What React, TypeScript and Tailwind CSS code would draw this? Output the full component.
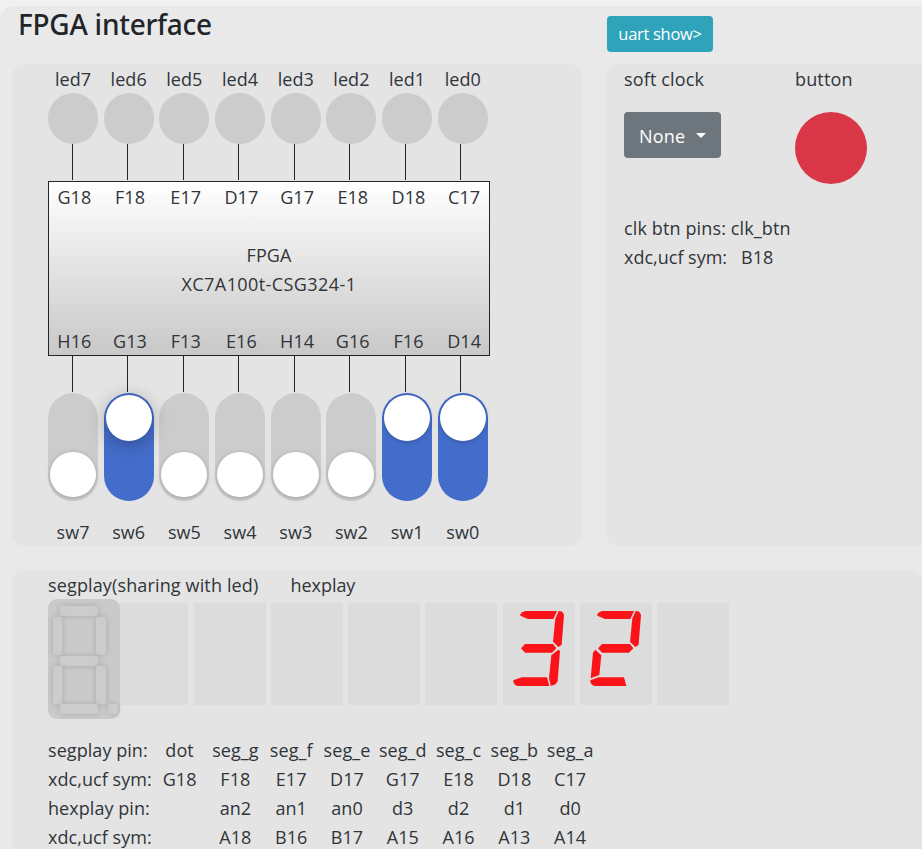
import React from "react";

const ledPins = ["G18", "F18", "E17", "D17", "G17", "E18", "D18", "C17"];
const switchPins = ["H16", "G13", "F13", "E16", "H14", "G16", "F16", "D14"];
const switches = [
  { name: "sw7", on: false, focused: false },
  { name: "sw6", on: true, focused: true },
  { name: "sw5", on: false, focused: false },
  { name: "sw4", on: false, focused: false },
  { name: "sw3", on: false, focused: false },
  { name: "sw2", on: false, focused: false },
  { name: "sw1", on: true, focused: false },
  { name: "sw0", on: true, focused: false },
];

const pinRows = [
  ["segplay pin:", "dot", "seg_g", "seg_f", "seg_e", "seg_d", "seg_c", "seg_b", "seg_a"],
  ["xdc,ucf sym:", "G18", "F18", "E17", "D17", "G17", "E18", "D18", "C17"],
  ["hexplay pin:", "", "an2", "an1", "an0", "d3", "d2", "d1", "d0"],
  ["xdc,ucf sym:", "", "A18", "B16", "B17", "A15", "A16", "A13", "A14"],
];

const segmentPaths: Record<string, string> = {
  a: "M52 34Q57 26 66 24H162L151 48H75L52 38Z",
  b: "M167 24Q181 24 183 37L176 124Q172 131 166 132L150 116L157 47Z",
  c: "M166 140L171 144L164 234Q159 248 143 248L138 226L145 157Z",
  d: "M31 232L56 223H132L139 249H45Q33 246 31 236Z",
  e: "M46 140L64 157L58 216L32 226L39 149Z",
  g: "M54 136L66 123H150L160 136L147 149H66Z",
};

const hexCells = ["", "", "", "", "", "abgcd", "abged", ""];

function Wires() {
  return (
    <div className="ml-6 flex h-9 w-[389px] justify-between">
      {ledPins.map((_, i) => (
        <span key={i} className="w-px bg-[#212529]" />
      ))}
    </div>
  );
}

function PinRow({ pins }: { pins: string[] }) {
  return (
    <div className="flex">
      {pins.map((pin, i) => (
        <span key={i} className="w-[55.7px] shrink-0 pr-[5px] text-center">
          {pin}
        </span>
      ))}
    </div>
  );
}

function Switch({ on, focused }: { on: boolean; focused: boolean }) {
  return (
    <div
      className={`flex h-[108px] w-[50px] flex-col rounded-full p-[2px] ${
        on ? "justify-start bg-[#446dcb]" : "justify-end bg-[#ccc] pb-[4px]"
      }`}
    >
      <div
        className={`w-[46px] rounded-full bg-white ${on ? "h-[46px]" : "h-[45px]"} ${
          focused
            ? "relative z-10 shadow-[0_3px_18px_rgba(0,0,0,0.3)]"
            : "shadow-[0_1px_5px_rgba(0,0,0,0.22)]"
        }`}
      />
    </div>
  );
}

const bar = "absolute rounded-[2px] bg-[#ccc] shadow-[0_0_6px_rgba(0,0,0,0.16)]";

function SegmentPanel() {
  return (
    <div className="relative z-10 h-[120px] w-[72px] shrink-0 rounded-[9px] bg-[#cacaca]">
      <i className={`${bar} left-[12px] top-[7px] h-[10px] w-[38px]`} />
      <i className={`${bar} left-[5px] top-[18px] h-[38px] w-[9px]`} />
      <i className={`${bar} left-[48px] top-[18px] h-[38px] w-[10px]`} />
      <i className={`${bar} left-[12px] top-[57px] h-[10px] w-[38px]`} />
      <i className={`${bar} left-[5px] top-[67px] h-[38px] w-[9px]`} />
      <i className={`${bar} left-[48px] top-[67px] h-[38px] w-[10px]`} />
      <i className={`${bar} left-[12px] top-[105px] h-[10px] w-[38px]`} />
      <i className={`${bar} left-[60px] top-[105px] h-[10px] w-[10px]`} />
    </div>
  );
}

export default function App() {
  return (
    <div className="h-[849px] w-[922px] overflow-hidden bg-[#f1f1f1] pt-[6px] font-['Open_Sans','Noto_Sans',sans-serif] text-[18px] font-normal leading-[29px] tracking-[0.06px] text-[#30353a]">
      <main className="h-[900px] rounded-tl-[14px] bg-[#e9e9e9] pl-3">
        <header className="flex h-[58px] items-start">
          <h1 className="w-[588px] pl-[6px] font-['Noto_Sans','Open_Sans',sans-serif] text-[28px] font-medium leading-9 tracking-[-0.25px] text-[#212529]">
            FPGA interface
          </h1>
          <button className="ml-[7px] mt-[10px] h-9 w-[106px] whitespace-nowrap rounded-[4px] bg-[#2fa3ba] text-[16.5px] font-normal leading-9 tracking-[-0.3px] text-white">
            uart show&gt;
          </button>
        </header>

        <div className="flex gap-6">
          <section className="h-[482px] w-[570px] shrink-0 rounded-[13px] bg-[#e4e4e4] pl-9">
            <div className="flex">
              {ledPins.map((_, i) => (
                <div key={i} className="w-[55.7px] shrink-0">
                  <div className="h-[29px] w-[50px] pt-px text-center">{`led${7 - i}`}</div>
                  <div className="h-[51px] w-[50px] rounded-full bg-[#ccc]" />
                </div>
              ))}
            </div>
            <Wires />
            <div className="mt-px flex h-[175px] w-[442px] flex-col justify-between border border-[#212529] bg-gradient-to-b from-white to-[#c8c8c8] pt-px">
              <PinRow pins={ledPins} />
              <div className="pt-px text-center">
                <p>FPGA</p>
                <p className="tracking-[0.42px]">XC7A100t-CSG324-1</p>
              </div>
              <div className="h-7">
                <PinRow pins={switchPins} />
              </div>
            </div>
            <Wires />
            <div className="mt-px flex">
              {switches.map((s) => (
                <div key={s.name} className="w-[55.7px] shrink-0">
                  <Switch on={s.on} focused={s.focused} />
                  <div className="mt-[17px] w-[50px] text-center">{s.name}</div>
                </div>
              ))}
            </div>
          </section>

          <section className="h-[482px] w-[400px] shrink-0 rounded-[13px] bg-[#e4e4e4] pl-[18px]">
            <div className="flex">
              <div className="w-[171px]">
                <div className="h-[29px] pt-px tracking-[0.15px]">soft clock</div>
                <button className="mt-[19px] flex h-[46px] w-[97px] items-center rounded-[4px] bg-[#6d757d] pl-[15px] pt-[2px] font-normal tracking-[0.2px] text-white">
                  <span>None</span>
                  <span className="mb-[2px] ml-[10.5px] border-x-[5px] border-t-[5px] border-x-transparent border-t-white" />
                </button>
              </div>
              <div>
                <div className="h-[29px] pt-px tracking-[0.15px]">button</div>
                <div className="mt-[19px] h-[72px] w-[72px] rounded-full bg-[#d93747]" />
              </div>
            </div>
            <div className="mt-[30px] tracking-[0.13px]">clk btn pins: clk_btn</div>
            <div className="whitespace-pre tracking-normal">xdc,ucf sym:   B18</div>
          </section>
        </div>

        <section className="mt-6 h-[287px] w-[910px] rounded-[13px] bg-[#e4e4e4] pl-9">
          <div className="flex h-[29px] pt-px">
            <span className="w-[242.5px] tracking-[0.14px]">segplay(sharing with led)</span>
            <span className="tracking-[-0.05px]">hexplay</span>
          </div>
          <div className="flex h-[137px] items-start">
            <SegmentPanel />
            <div className="-ml-[3.6px] mt-[4px] flex gap-[5.24px]">
              {hexCells.map((segments, i) => (
                <div key={i} className="h-[102px] w-[72px] bg-[#dcdcdc]">
                  {segments && (
                    <svg className="block h-full w-full" viewBox="0 0 216 306" fill="#fa1419">
                      {segments.split("").map((s) => (
                        <path key={s} d={segmentPaths[s]} />
                      ))}
                    </svg>
                  )}
                </div>
              ))}
            </div>
          </div>
          {pinRows.map((row, r) => (
            <div key={r} className="flex">
              {row.map((cell, c) => (
                <span
                  key={c}
                  className={
                    c === 0
                      ? "w-[103.7px] shrink-0 whitespace-nowrap"
                      : "w-[55.8px] shrink-0 text-center"
                  }
                >
                  {cell}
                </span>
              ))}
            </div>
          ))}
        </section>
      </main>
    </div>
  );
}
